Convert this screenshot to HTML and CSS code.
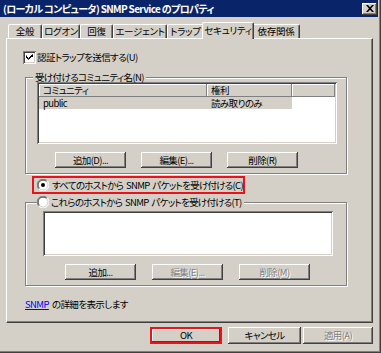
FILE: index.html
```html
<!DOCTYPE html>
<html lang="ja">
<head>
<meta charset="utf-8">
<link rel="stylesheet" href="styles.css">
</head>
<body>
<div class="window">
  <div class="titlebar">
    <span class="title">(ローカル コンピュータ) SNMP Service のプロパティ</span>
    <span class="close"><svg width="8" height="7" viewBox="0 0 8 7"><path d="M0 0h2l2 2.2L6 0h2L5 3.5 8 7H6L4 4.8 2 7H0l3-3.5z" fill="#000"/></svg></span>
  </div>
  <div class="content">
    <div class="tabs">
      <div class="tab t1">全般</div>
      <div class="tab t2">ログオン</div>
      <div class="tab t3">回復</div>
      <div class="tab t4">エージェント</div>
      <div class="tab t5">トラップ</div>
      <div class="tab t6 sel">セキュリティ</div>
      <div class="tab t7">依存関係</div>
    </div>
    <div class="panel">
      <div class="check">
        <svg class="cbox" width="13" height="13" viewBox="0 0 13 13">
          <rect x="0" y="0" width="13" height="13" fill="#808080"/>
          <rect x="1" y="1" width="12" height="12" fill="#fff"/>
          <rect x="1" y="1" width="11" height="11" fill="#404040"/>
          <rect x="2" y="2" width="10" height="10" fill="#d4d0c8"/>
          <rect x="2" y="2" width="9" height="9" fill="#fff"/>
          <path d="M3.5 5.5l2 2 4-4M3.5 6.5l2 2 4-4" stroke="#000" stroke-width="1" fill="none"/>
          <path d="M3.5 4.5v2.5M9.5 3.5v2.5" stroke="#000" stroke-width="1"/>
        </svg>
        <span>認証トラップを送信する(U)</span>
      </div>
      <fieldset class="group g1">
        <legend class="legend1">受け付けるコミュニティ名(N)</legend>
        <div class="list1">
          <div class="hdr">
            <div class="hcell c1">コミュニティ</div>
            <div class="hcell c2">権利</div>
            <div class="hcell c3"></div>
          </div>
          <div class="row selrow">
            <div class="cell c1">public</div>
            <div class="cell c2">読み取りのみ</div>
          </div>
        </div>
        <div class="btnrow">
          <div class="btn">追加(D)...</div>
          <div class="btn">編集(E)...</div>
          <div class="btn">削除(R)</div>
        </div>
      </fieldset>
      <div class="radio1">
        <svg class="rad" width="12" height="12" viewBox="0 0 12 12">
          <circle cx="6" cy="6" r="5.5" fill="#fff"/>
          <path d="M1.8 10.2A5.5 5.5 0 0 1 10.2 1.8" stroke="#808080" fill="none"/>
          <path d="M10.2 1.8A5.5 5.5 0 0 1 1.8 10.2" stroke="#fff" fill="none"/>
          <path d="M2.5 9.5A4.5 4.5 0 0 1 9.5 2.5" stroke="#404040" fill="none"/>
          <path d="M9.5 2.5A4.5 4.5 0 0 1 2.5 9.5" stroke="#d4d0c8" fill="none"/>
          <circle cx="6" cy="6" r="2" fill="#000"/>
        </svg>
        <span>すべてのホストから SNMP パケットを受け付ける(C)</span>
      </div>
      <fieldset class="group g2">
        <legend class="legend2">
          <svg class="rad" width="12" height="12" viewBox="0 0 12 12">
            <circle cx="6" cy="6" r="5.5" fill="#fff"/>
            <path d="M1.8 10.2A5.5 5.5 0 0 1 10.2 1.8" stroke="#808080" fill="none"/>
            <path d="M10.2 1.8A5.5 5.5 0 0 1 1.8 10.2" stroke="#fff" fill="none"/>
            <path d="M2.5 9.5A4.5 4.5 0 0 1 9.5 2.5" stroke="#404040" fill="none"/>
            <path d="M9.5 2.5A4.5 4.5 0 0 1 2.5 9.5" stroke="#d4d0c8" fill="none"/>
          </svg>
          <span>これらのホストから SNMP パケットを受け付ける(T)</span>
        </legend>
        <div class="list2"></div>
        <div class="btnrow btnrow2">
          <div class="btn">追加...</div>
          <div class="btn disabled">編集(E)...</div>
          <div class="btn disabled">削除(M)</div>
        </div>
      </fieldset>
      <div class="info"><span class="link">SNMP</span> の詳細を表示します</div>
    </div>
    <div class="footer">
      <div class="btn fbtn ok">OK</div>
      <div class="btn fbtn cancel">キャンセル</div>
      <div class="btn fbtn apply disabled">適用(A)</div>
    </div>
  </div>
</div>
</body>
</html>
```
FILE: styles.css
```css
* { box-sizing: border-box; }
html, body { margin: 0; padding: 0; }
body {
  width: 381px;
  height: 353px;
  overflow: hidden;
  background: #d4d0c8;
  font-family: "Noto Sans CJK JP", "Liberation Sans", sans-serif;
  font-size: 9.5px;
  line-height: 11px;
  font-feature-settings: "palt";
  letter-spacing: -0.6px;
  word-spacing: 1.5px;
  white-space: nowrap;
  color: #000;
}
svg { flex: none; display: block; }
.window {
  width: 381px;
  height: 353px;
  background: #d4d0c8;
  padding: 0 3px 3px 0;
  box-shadow: inset -1px -1px #404040, inset -2px -2px #808080;
  display: flex;
  flex-direction: column;
}
.titlebar {
  height: 17px;
  flex: none;
  background: #0a246a;
  color: #fff;
  font-weight: bold;
  font-size: 10px;
  letter-spacing: -0.65px;
  word-spacing: 0;
  display: flex;
  align-items: center;
  justify-content: space-between;
  padding: 0 1px 0 3px;
  line-height: 17px;
}
.close {
  width: 15px;
  height: 12px;
  background: #d4d0c8;
  box-shadow: inset -1px -1px #404040, inset 1px 1px #fff, inset -2px -2px #808080;
  display: flex;
  align-items: center;
  justify-content: center;
}
.content {
  padding-left: 6px;
  flex: 1;
  display: flex;
  flex-direction: column;
}
.tabs {
  display: flex;
  height: 16px;
  margin-top: 5px;
  padding-left: 2px;
  align-items: flex-end;
  position: relative;
  z-index: 2;
}
.tab {
  height: 14px;
  border: 1px solid;
  border-color: #fff #404040 transparent #fff;
  border-bottom: 0;
  border-radius: 2px 2px 0 0;
  box-shadow: inset -1px 0 #808080;
  background: #d4d0c8;
  display: flex;
  align-items: center;
  justify-content: center;
  line-height: 11px;
  letter-spacing: -0.3px;
}
.t1 { width: 34px; }
.t2 { width: 38px; }
.t3 { width: 33px; }
.t4 { width: 54px; }
.t5 { width: 37px; }
.t6 { width: 48px; }
.t7 { width: 48px; }
.tab.sel {
  height: 17px;
  margin: 0 -2px -1px;
  width: 52px;
  position: relative;
  z-index: 3;
  padding-bottom: 2px;
}
.panel {
  width: 367px;
  height: 285px;
  border: 1px solid;
  border-color: #fff #404040 #404040 #fff;
  box-shadow: inset -1px -1px #808080;
  position: relative;
  z-index: 1;
  display: flex;
  flex-direction: column;
}
.check {
  display: flex;
  align-items: center;
  margin: 12px 0 0 16px;
  height: 13px;
}
.check span { margin-left: 1px; }
.group {
  margin: 0;
  padding: 0;
  border: 1px solid #808080;
  box-shadow: inset 1px 1px #fff, 1px 1px #fff;
  min-width: 0;
}
.g1 {
  margin: 8px 0 0 18px;
  width: 322px;
  padding: 0 0 5px 11px;
}
.legend1 {
  margin-left: -4px;
  padding: 0 2px;
  line-height: 10px;
  height: 10px;
  background: #d4d0c8;
}
.list1 {
  width: 300px;
  height: 62px;
  background: #fff;
  box-shadow: inset 1px 1px #808080, inset -1px -1px #fff, inset 2px 2px #404040, inset -2px -2px #d4d0c8;
  padding: 2px;
}
.hdr {
  display: flex;
  height: 13px;
  background: #d4d0c8;
}
.hcell {
  height: 13px;
  box-shadow: inset -1px -1px #808080, inset 1px 1px #fff;
  padding-left: 4px;
  line-height: 12px;
}
.c1 { width: 168px; }
.c2 { width: 85px; }
.c3 { flex: 1; }
.row {
  display: flex;
  height: 12px;
  line-height: 12px;
  width: 253px;
}
.selrow { background: #d4d0c8; }
.cell { padding-left: 4px; }
.btnrow {
  display: flex;
  gap: 15px;
  margin-top: 8px;
  padding-left: 18px;
}
.btn {
  width: 71px;
  height: 16px;
  background: #d4d0c8;
  box-shadow: inset -1px -1px #404040, inset 1px 1px #fff, inset -2px -2px #808080;
  display: flex;
  align-items: center;
  justify-content: center;
  line-height: 11px;
}
.btn.disabled {
  color: #808080;
  text-shadow: 1px 1px #fff;
}
.radio1 {
  margin: 2px 0 0 25px;
  width: 213px;
  height: 18px;
  border: 2px solid #e8141c;
  display: flex;
  align-items: center;
  padding-left: 3px;
}
.radio1 span { margin-left: 3px; letter-spacing: -0.72px; }
.g2 {
  margin: 2px 0 0 18px;
  width: 322px;
  padding: 0 0 5px 0;
}
.legend2 {
  margin-left: 11px;
  padding: 0 2px 0 0;
  height: 12px;
  line-height: 12px;
  display: flex;
  align-items: center;
  background: #d4d0c8;
}
.legend2 span { margin-left: 2px; letter-spacing: -0.72px; }
.list2 {
  margin: 3px 0 0 17px;
  width: 290px;
  height: 45px;
  background: #fff;
  box-shadow: inset 1px 1px #808080, inset -1px -1px #fff, inset 2px 2px #404040, inset -2px -2px #d4d0c8;
}
.btnrow2 { padding-left: 39px; gap: 16px; }
.info {
  margin: 12px 0 0 18px;
  line-height: 13px;
}
.link { color: #0000ff; text-decoration: underline; }
.footer {
  display: flex;
  justify-content: flex-end;
  margin-top: 4px;
  width: 367px;
}
.fbtn { height: 17px; }
.ok { width: 72px; box-shadow: inset 0 0 0 2px #e8141c, inset -3px -3px #404040, inset 3px 3px #fff; }
.cancel { width: 73px; margin-left: 6px; }
.apply { width: 70px; margin-left: 2px; }
```
